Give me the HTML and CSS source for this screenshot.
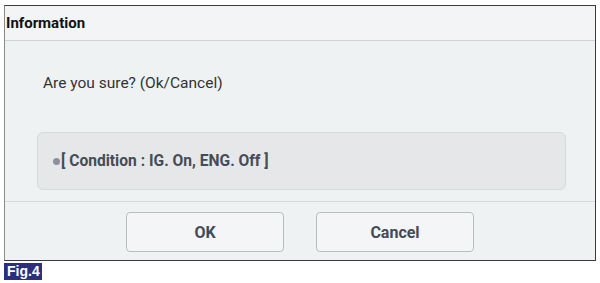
FILE: index.html
```html
<!DOCTYPE html>
<html>
<head>
<meta charset="utf-8">
<link rel="stylesheet" href="styles.css">
</head>
<body>
<div class="dialog">
  <div class="header">Information</div>
  <div class="content">
    <p class="question">Are you sure? (Ok/Cancel)</p>
    <div class="condition"><span class="dot"></span>[ Condition : IG. On, ENG. Off ]</div>
  </div>
  <div class="footer">
    <button class="btn">OK</button>
    <button class="btn">Cancel</button>
  </div>
</div>
<div class="fig">Fig.4</div>
</body>
</html>
```
FILE: styles.css
```css
html, body { margin: 0; padding: 0; background: #ffffff; }
body { padding: 5px 0 0 4px; font-family: Roboto, "Liberation Sans", sans-serif; }
.dialog {
  width: 590px;
  height: 254px;
  border: 1px solid #3a3a3a;
  border-left-color: #8a8a8a;
  background: #eff2f3;
  display: flex;
  flex-direction: column;
}
.header {
  height: 35px;
  flex: none;
  box-sizing: border-box;
  border-bottom: 1px solid #cfd3d5;
  background: #f2f4f5;
  font-weight: 700;
  font-size: 15px;
  color: #111;
  display: flex;
  align-items: center;
  padding-left: 1px;
}
.content {
  height: 161px;
  flex: none;
  box-sizing: border-box;
  border-bottom: 1px solid #d7dadc;
  padding: 0 29px 0 32px;
}
.question {
  margin: 33px 0 0 6px;
  font-size: 15.5px;
  color: #333;
  line-height: 19px;
}
.condition {
  margin-top: 39px;
  height: 58px;
  box-sizing: border-box;
  border: 1px solid #d6d9dc;
  border-radius: 6px;
  background: #e5e7e9;
  display: flex;
  align-items: center;
  padding-left: 15px;
  font-weight: 700;
  font-size: 15.6px;
  color: #464c57;
}
.dot {
  width: 7px;
  height: 7px;
  border-radius: 50%;
  background: #8e9296;
  margin-right: 1px;
}
.footer {
  flex: 1;
  display: flex;
  justify-content: center;
  align-items: flex-start;
  gap: 32px;
  padding-top: 10px;
}
.btn {
  width: 158px;
  height: 40px;
  border: 1px solid #b9bdc1;
  border-radius: 4px;
  background: #f3f5f6;
  font-family: Roboto, "Liberation Sans", sans-serif;
  font-weight: 700;
  font-size: 16px;
  color: #444b56;
}
.fig {
  display: inline-block;
  margin-top: 2px;
  background: #2b2f7c;
  color: #fff;
  font-weight: 700;
  font-size: 14px;
  line-height: 17px;
  padding: 0 2px 0 3px;
  font-family: "Liberation Sans", Arial, sans-serif;
}
```
